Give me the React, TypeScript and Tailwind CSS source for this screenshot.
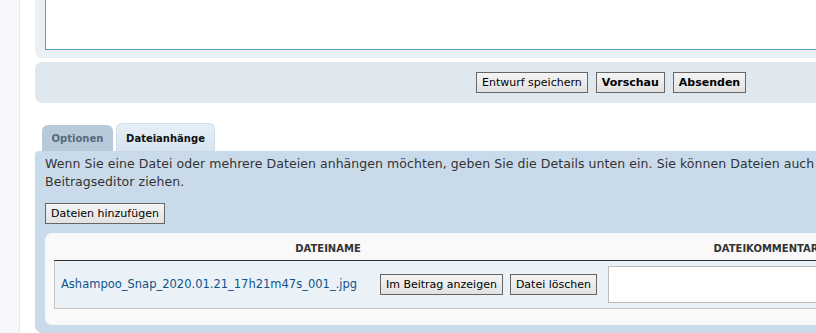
import React from 'react';

const btn =
  "h-[21px] shrink-0 whitespace-nowrap border border-[#666] bg-gradient-to-b from-[#f4f4f4] to-[#e2e2e2] px-[5px] text-[11px] leading-[19px] text-black";

export default function App() {
  return (
    <div className="flex h-[333px] w-[816px] overflow-hidden bg-white font-['DejaVu_Sans',Verdana,sans-serif] text-[#333]">
      {/* left rail */}
      <div className="w-[20px] shrink-0 border-r border-[#e4e8ed] bg-[#f5f7fa]" />

      <div className="w-[1150px] shrink-0 pl-[15px]">
        {/* editor box */}
        <div className="rounded-b-[7px] bg-[#ebf0f3] px-[10px] pb-[8px]">
          <div className="h-[50px] border border-t-0 border-[#4ea1c4] bg-white" />
        </div>

        {/* submit buttons */}
        <div className="mt-[4px] flex h-[41px] items-center rounded-[7px] bg-[#dfe8ee] pl-[441px]">
          <button className={btn + " px-[3px]"}>Entwurf speichern</button>
          <button className={btn + " ml-[8px] px-[3px] text-[10.5px] font-bold"}>Vorschau</button>
          <button className={btn + " ml-[8px] px-[3px] text-[10.5px] font-bold"}>Absenden</button>
        </div>

        {/* tabs */}
        <div className="mt-[20px] flex items-end pl-[7px]">
          <div className="flex h-[26px] w-[71px] items-center justify-center rounded-t-[6px] bg-[#b8cad9] text-[10px] font-bold text-[#536a7f]">
            Optionen
          </div>
          <div className="ml-[3px] flex h-[28px] w-[99px] items-center justify-center rounded-t-[6px] border border-b-0 border-[#cfdeea] bg-gradient-to-b from-[#e6eff7] to-[#d6e4f0] pt-[1px] text-[10px] font-bold text-[#111]">
            Dateianhänge
          </div>
        </div>

        {/* attachments panel */}
        <div className="h-[182px] rounded-[7px] rounded-tl-[4px] bg-[#c9dbea] px-[10px] pt-[4px]">
          <p className="whitespace-nowrap text-[12.5px] leading-[18px] tracking-[0.06px]">
            Wenn Sie eine Datei oder mehrere Dateien anhängen möchten, geben Sie die Details unten ein. Sie können Dateien auch
            <br />
            Beitragseditor ziehen.
          </p>
          <button className={btn + " mt-[12px] h-[20px] px-[3px] leading-[18px]"}>Dateien hinzufügen</button>

          <div className="mt-[9px] rounded-[7px] bg-[#f9f9f9] pb-[16px] pl-[9px]">
            <div className="flex h-[28px] items-center border-b border-[#333] text-[10px] font-bold text-[#333]">
              <div className="w-[548px] pt-[3px] text-center">DATEINAME</div>
              <div className="w-[328px] pt-[3px] text-center">DATEIKOMMENTAR</div>
            </div>
            <div className="flex h-[48px] items-center border-b border-l border-[#c4c4c4] bg-[#eaf2f7]">
              <div className="flex w-[548px] items-center pl-[6px] pr-[6px]">
                <a className="whitespace-nowrap text-[11.5px] text-[#105289]">Ashampoo_Snap_2020.01.21_17h21m47s_001_.jpg</a>
                <div className="ml-auto flex gap-[7px]">
                  <button className={btn + " px-[3px]"}>Im Beitrag anzeigen</button>
                  <button className={btn + " px-[3px]"}>Datei löschen</button>
                </div>
              </div>
              <div className="pl-[5px]">
                <div className="h-[37px] w-[400px] border border-[#bcbcbc] bg-white" />
              </div>
            </div>
          </div>
        </div>
      </div>
    </div>
  );
}
